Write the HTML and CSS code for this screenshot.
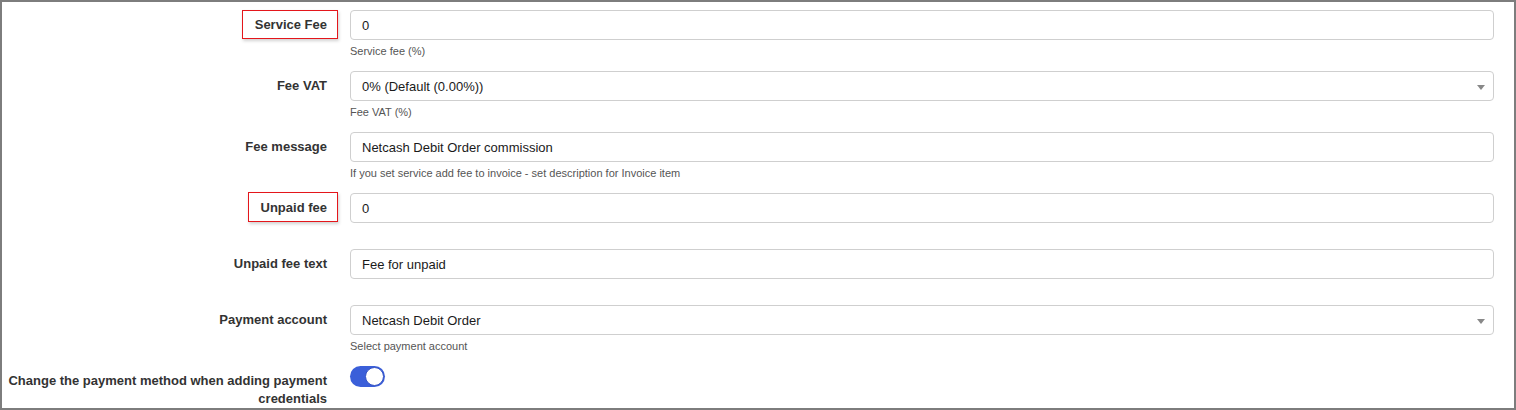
FILE: index.html
```html
<!DOCTYPE html>
<html>
<head>
<meta charset="utf-8">
<link rel="stylesheet" href="styles.css">
</head>
<body>
<div class="frame">
  <div class="row">
    <div class="label"><span class="marked">Service Fee</span></div>
    <div class="field">
      <div class="input">0</div>
      <div class="help">Service fee (%)</div>
    </div>
  </div>
  <div class="row">
    <div class="label">Fee VAT</div>
    <div class="field">
      <div class="input select">0% (Default (0.00%))<span class="caret"></span></div>
      <div class="help">Fee VAT (%)</div>
    </div>
  </div>
  <div class="row">
    <div class="label">Fee message</div>
    <div class="field">
      <div class="input">Netcash Debit Order commission</div>
      <div class="help">If you set service add fee to invoice - set description for Invoice item</div>
    </div>
  </div>
  <div class="row nohelp">
    <div class="label"><span class="marked">Unpaid fee</span></div>
    <div class="field">
      <div class="input">0</div>
    </div>
  </div>
  <div class="row nohelp">
    <div class="label">Unpaid fee text</div>
    <div class="field">
      <div class="input">Fee for unpaid</div>
    </div>
  </div>
  <div class="row">
    <div class="label">Payment account</div>
    <div class="field">
      <div class="input select">Netcash Debit Order<span class="caret"></span></div>
      <div class="help">Select payment account</div>
    </div>
  </div>
  <div class="row last">
    <div class="label wrap">Change the payment method when adding payment credentials</div>
    <div class="field">
      <div class="toggle"><span class="knob"></span></div>
    </div>
  </div>
</div>
</body>
</html>
```

FILE: styles.css
```css
* { box-sizing: border-box; }
html, body { margin: 0; padding: 0; background: #fff; }
body {
  font-family: "Liberation Sans", Arial, sans-serif;
  font-size: 13px;
  color: #222;
}
.frame {
  width: 1516px;
  height: 410px;
  border: 2px solid #7d7d7d;
  padding: 8px 20px 0 0;
  overflow: hidden;
}
.row {
  display: grid;
  grid-template-columns: 348px 1fr;
  margin-bottom: 12px;
}
.row.nohelp { margin-bottom: 26px; }
.label {
  text-align: right;
  padding: 7px 23px 0 6px;
  font-weight: bold;
  line-height: 15px;
  color: #333;
}
.marked {
  display: inline-block;
  margin-top: -8px;
  margin-right: -11px;
  padding: 6px 10px 6px 12px;
  border: 1px solid #e4161b;
  box-shadow: 1px 2px 3px rgba(0,0,0,0.18);
}
.row.nohelp .marked { padding: 7px 10px 6px 12px; }
.input {
  position: relative;
  height: 30px;
  border: 1px solid #cfcfcf;
  border-radius: 4px;
  padding: 1px 11px 0;
  line-height: 28px;
  color: #1a1a1a;
  background: #fff;
}
.caret {
  position: absolute;
  right: 8px;
  top: 13px;
  width: 0;
  height: 0;
  border-left: 4px solid transparent;
  border-right: 4px solid transparent;
  border-top: 5px solid #888;
}
.help {
  margin-top: 4px;
  font-size: 11px;
  line-height: 15px;
  color: #555;
}
.row.last { margin-top: 2px; }
.row.last .label { padding-top: 6px; line-height: 18px; }
.toggle {
  width: 35px;
  height: 21px;
  border-radius: 11px;
  background: #3b5fd9;
  position: relative;
}
.knob {
  position: absolute;
  right: 1px;
  top: 1px;
  width: 19px;
  height: 19px;
  border-radius: 50%;
  background: #fff;
  border: 1px solid #3553c4;
}
```
